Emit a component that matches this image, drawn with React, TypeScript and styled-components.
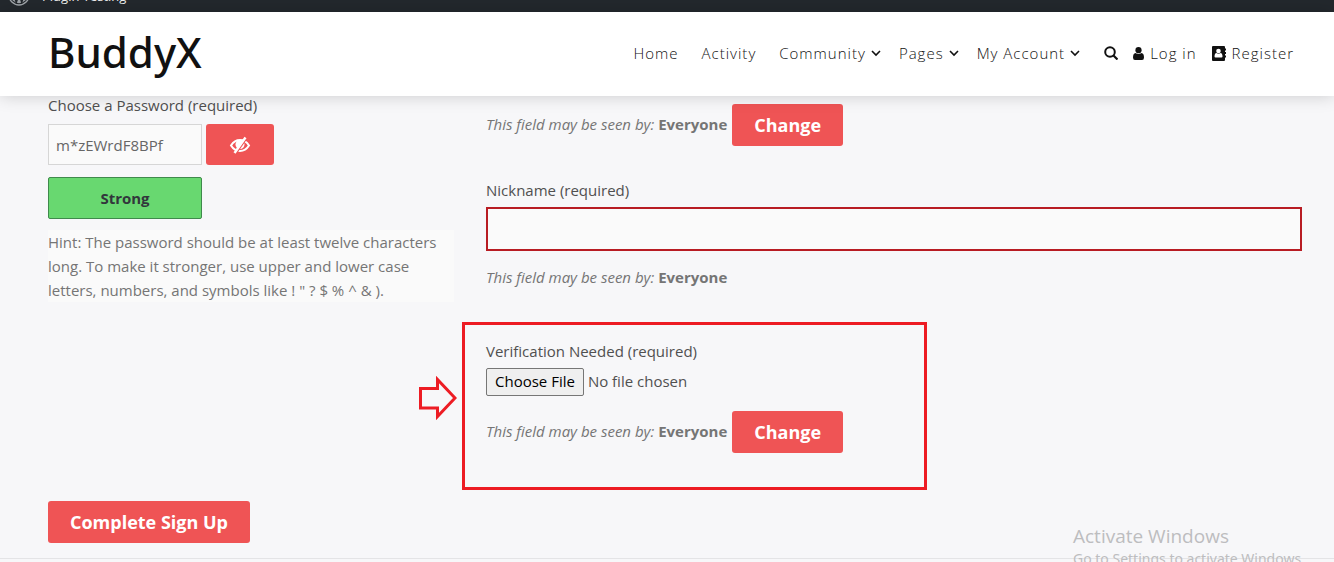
import React from "react";
import styled, { createGlobalStyle } from "styled-components";

const GlobalStyle = createGlobalStyle`
  * { box-sizing: border-box; }
  html, body { margin: 0; background: #f7f7f9; }
  body {
    font-family: "Open Sans", "Noto Sans", sans-serif;
    font-size: 15px;
    line-height: 24px;
    color: #505050;
    overflow: hidden;
  }
  button, input { font-family: inherit; font-size: inherit; }
`;

const Page = styled.div`
  position: relative;
  height: 100vh;
  display: flex;
  flex-direction: column;
  overflow: hidden;
`;

const AdminBar = styled.div`
  height: 12px;
  flex: none;
  padding: 0 0 6px 8px;
  display: flex;
  align-items: flex-end;
  gap: 12px;
  overflow: hidden;
  background: #23282d;
  color: #eee;
  font-size: 13px;
  line-height: 20px;
`;

const AdminLink = styled.a`
  display: block;
  color: inherit;
  text-decoration: none;
  flex: none;

  svg { display: block; }
`;

const Header = styled.header`
  position: relative;
  z-index: 1;
  flex: none;
  height: 84px;
  padding: 0 40px 0 48px;
  display: flex;
  align-items: center;
  justify-content: space-between;
  background: #fff;
  box-shadow: 0 0 16px rgba(0, 0, 0, 0.18);
`;

const Brand = styled.a`
  padding-bottom: 4px;
  color: #111;
  font-family: "Noto Sans", sans-serif;
  font-size: 42px;
  font-weight: 500;
  line-height: 74px;
  text-decoration: none;
`;

const Nav = styled.nav`
  display: flex;
  align-items: center;
  gap: 18px;
  padding-bottom: 2px;
`;

const NavLink = styled.a<{ $plain?: boolean; $icon?: boolean }>`
  display: flex;
  align-items: center;
  gap: ${(p) => (p.$icon ? 6 : 5)}px;
  padding-right: ${(p) => (p.$plain ? 5 : 0)}px;
  color: #111;
  font-weight: 300;
  letter-spacing: 1px;
  text-decoration: none;
`;

const UserLinks = styled.div`
  display: flex;
  align-items: center;
  gap: 15px;
  padding-left: 6px;
`;

const IconButton = styled.button`
  display: flex;
  padding: 0;
  border: 0;
  background: none;
  color: #111;
`;

const Form = styled.form`
  flex: none;
  padding: 0 32px 0 48px;
  display: grid;
  grid-template-columns: 406px 1fr;
  column-gap: 32px;
`;

const Account = styled.section`
  min-width: 0;
`;

const Details = styled.section`
  min-width: 0;
  padding-top: 8px;
`;

const Label = styled.label`
  display: block;
  line-height: 18px;
`;

const PasswordRow = styled.div`
  display: flex;
  align-items: center;
  gap: 4px;
  margin: 10px 0 12px;
`;

const PasswordInput = styled.input`
  width: 154px;
  height: 41px;
  padding: 0 7px;
  border: 1px solid #d6d6d6;
  background: #fafafa;
  color: #666;
`;

const Button = styled.button<{ $compact?: boolean }>`
  display: inline-flex;
  align-items: center;
  justify-content: center;
  height: ${(p) => (p.$compact ? 41 : 42)}px;
  width: ${(p) => (p.$compact ? "68px" : "auto")};
  padding: 0 22px;
  border: 0;
  border-radius: 3px;
  background: #ef5455;
  color: #fff;
  font-size: 18px;
  font-weight: 700;
`;

const Strength = styled.div`
  width: 154px;
  height: 42px;
  border: 1px solid #3f8a4c;
  border-radius: 2px;
  background: #68d870;
  color: #32373c;
  font-weight: 700;
  line-height: 40px;
  text-align: center;
`;

const Hint = styled.p`
  margin: 11px 0 0;
  background: #fafafa;
  color: #757575;
`;

const Visibility = styled.div`
  display: flex;
  align-items: center;
  gap: 5px;
  min-height: 42px;
  color: #757575;

  span { padding-bottom: 3px; }
`;

const Field = styled.div`
  margin-top: 35px;
`;

const NicknameInput = styled.input`
  display: block;
  width: 100%;
  height: 44px;
  margin: 8px 0 6px;
  padding: 0 8px;
  border: 2px solid #b81c23;
  background: #fafafa;
`;

const Highlight = styled.div`
  position: relative;
  width: 465px;
  margin: 23px 0 0 -24px;
  padding: 17px 21px 34px;
  border: 3px solid #ed1c24;
`;

const Pointer = styled.svg`
  position: absolute;
  left: -48px;
  top: 51px;
`;

const FileInput = styled.input`
  display: block;
  height: 28px;
  margin: 8px 0 15px;
  color: #505050;

  &::file-selector-button {
    height: 28px;
    padding: 0 8px 2px;
    border: 1px solid #767676;
    border-radius: 2px;
    background: #efefef;
    color: #000;
    font: inherit;
  }
`;

const Actions = styled.div`
  flex: none;
  padding: 11px 48px 15px;
  border-bottom: 1px solid #e4e4e6;
`;

const Watermark = styled.div`
  position: absolute;
  left: 1073px;
  top: 524px;
  color: #bdbdbf;
  font-family: "Noto Sans", sans-serif;
  font-size: 14px;
  line-height: 22px;
  white-space: nowrap;
`;

const WatermarkTitle = styled.div`
  font-family: "Open Sans", sans-serif;
  font-size: 19px;
  line-height: 24px;
`;

const Chevron = () => (
  <svg width="10" height="7" viewBox="0 0 10 7" fill="none" stroke="#111" strokeWidth="1.6">
    <path d="M1 1l4 4 4-4" />
  </svg>
);

const SearchIcon = () => (
  <svg width="14" height="14" viewBox="0 0 14 14" fill="none" stroke="currentColor" strokeWidth="2">
    <circle cx="6" cy="6" r="4.8" />
    <path d="M9.5 9.5l4 4" strokeWidth="2.2" />
  </svg>
);

const UserIcon = () => (
  <svg width="11" height="13" viewBox="0 0 11 13" fill="#111">
    <circle cx="5.5" cy="3.2" r="3.1" />
    <path d="M2.5 6q3 2 6 0 2.5.4 2.5 4.5 0 2.5-2 2.5H2q-2 0-2-2.5 0-4.1 2.5-4.5z" />
  </svg>
);

const RegisterIcon = () => (
  <svg width="14" height="15" viewBox="0 0 14 15">
    <path fill="#111" d="M1 0h11q1 0 1 1v1.500h1v2h-1v1.500h1v2h-1v1.500h1v2h-1V14q0 1-1 1H1q-1 0-1-1V1q0-1 1-1z" />
    <circle cx="6.5" cy="5" r="2.3" fill="#fff" />
    <path fill="#fff" d="M4.5 7q2 1.300 4 0 2 .4 2 3.600 0 1-1 1h-6q-1 0-1-1 0-3.200 2-3.600z" />
  </svg>
);

const EyeSlash = () => (
  <svg width="22" height="18" viewBox="0 0 22 18" fill="none" stroke="#fff">
    <path d="M2 9.500q3.500-5.500 9-5.500t9 5.500q-3.500 5.500-9 5.500t-9-5.500z" strokeWidth="2" />
    <circle cx="11" cy="8.500" r="4.500" fill="#fff" stroke="none" />
    <path d="M18.300 1.500L7.300 17" stroke="#ef5455" strokeWidth="1.500" />
    <path d="M16.500 1.500L5.500 17" strokeWidth="2.400" />
  </svg>
);

const WordPressIcon = () => (
  <svg width="22" height="22" viewBox="0 0 22 22" fill="none" stroke="#a0a5aa">
    <circle cx="11" cy="11" r="10" strokeWidth="1.4" />
    <circle cx="11" cy="11" r="8.3" fill="#a0a5aa" stroke="none" />
    <path d="M4 6l4.500 13M9.500 6l4.500 13M11 11l-3 8M17 8l-3.500 11" stroke="#23282d" strokeWidth="1.5" />
  </svg>
);

const menu = [
  { label: "Home" },
  { label: "Activity" },
  { label: "Community", children: true },
  { label: "Pages", children: true },
  { label: "My Account", children: true },
];

const SeenBy = ({ change }: { change?: boolean }) => (
  <Visibility>
    <span><em>This field may be seen by:</em> <strong>Everyone</strong></span>
    {change && <Button type="button">Change</Button>}
  </Visibility>
);

export default function App() {
  return (
    <Page>
      <GlobalStyle />
      <AdminBar>
        <AdminLink href="#" aria-label="WordPress"><WordPressIcon /></AdminLink>
        <AdminLink href="#">Plugin Testing</AdminLink>
      </AdminBar>
      <Header>
        <Brand href="#">BuddyX</Brand>
        <Nav>
          {menu.map((m) => (
            <NavLink href="#" key={m.label} $plain={!m.children}>{m.label}{m.children && <Chevron />}</NavLink>
          ))}
          <UserLinks>
            <IconButton type="button" aria-label="Search"><SearchIcon /></IconButton>
            <NavLink href="#" $icon><UserIcon />Log in</NavLink>
            <NavLink href="#" $icon><RegisterIcon />Register</NavLink>
          </UserLinks>
        </Nav>
      </Header>
      <Form id="signup">
        <Account>
          <Label htmlFor="password">Choose a Password (required)</Label>
          <PasswordRow>
            <PasswordInput id="password" type="text" defaultValue="m*zEWrdF8BPf" />
            <Button $compact type="button" aria-label="Hide password"><EyeSlash /></Button>
          </PasswordRow>
          <Strength>Strong</Strength>
          <Hint>
            Hint: The password should be at least twelve characters long. To make it stronger, use
            upper and lower case letters, numbers, and symbols like ! " ? $ % ^ &amp; ).
          </Hint>
        </Account>
        <Details>
          <SeenBy change />
          <Field>
            <Label htmlFor="nickname">Nickname (required)</Label>
            <NicknameInput id="nickname" type="text" />
            <SeenBy />
          </Field>
          <Highlight>
            <Pointer width="40" height="44" viewBox="0 0 40 44" fill="none" stroke="#ed1c24" strokeWidth="3">
              <path d="M3.500 12.500h17V3.500L38 22 20.500 40.500V32h-17z" />
            </Pointer>
            <Label htmlFor="verification">Verification Needed (required)</Label>
            <FileInput id="verification" type="file" />
            <SeenBy change />
          </Highlight>
        </Details>
      </Form>
      <Actions><Button type="submit" form="signup">Complete Sign Up</Button></Actions>
      <Watermark>
        <WatermarkTitle>Activate Windows</WatermarkTitle>
        Go to Settings to activate Windows.
      </Watermark>
    </Page>
  );
}
